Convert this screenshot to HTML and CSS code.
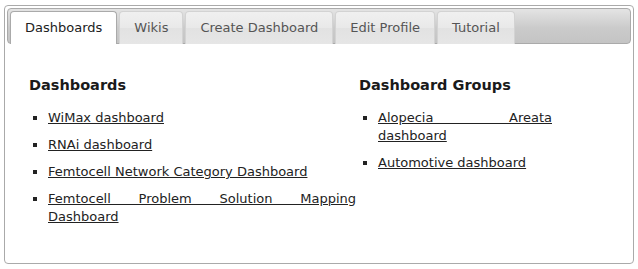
FILE: index.html
```html
<!DOCTYPE html>
<html lang="en">
<head>
  <meta charset="UTF-8">
  <title>Dashboards</title>
  <link rel="stylesheet" href="styles.css">
</head>
<body>

  <div class="tabs">
    <ul class="tab-nav">
      <li class="active"><a href="#">Dashboards</a></li>
      <li><a href="#">Wikis</a></li>
      <li><a href="#">Create Dashboard</a></li>
      <li><a href="#">Edit Profile</a></li>
      <li><a href="#">Tutorial</a></li>
    </ul>

    <div class="panel">
      <div class="col col-left">
        <h3>Dashboards</h3>
        <ul class="links">
          <li><a href="#">WiMax dashboard</a></li>
          <li><a href="#">RNAi dashboard</a></li>
          <li><a href="#">Femtocell Network Category Dashboard</a></li>
          <li><a href="#">Femtocell Problem Solution Mapping Dashboard</a></li>
        </ul>
      </div>
      <div class="col col-right">
        <h3>Dashboard Groups</h3>
        <ul class="links">
          <li><a href="#">Alopecia Areata dashboard</a></li>
          <li><a href="#">Automotive dashboard</a></li>
        </ul>
      </div>
    </div>
  </div>

</body>
</html>
```

FILE: styles.css
```css
body {
  margin: 5px 4px;
  background: #fff;
  font-family: Verdana, 'DejaVu Sans', sans-serif;
  font-size: 13px;
  color: #222;
}
.tabs {
  border: 1px solid #aaa;
  border-radius: 4px;
  padding: 2px;
  background: #fff;
}
.tab-nav {
  display: flex;
  list-style: none;
  margin: 0;
  padding: 2px 2px 0 2px;
  border: 1px solid #aaa;
  border-radius: 4px;
  background: linear-gradient(#e4e4e4, #cbcbcb 55%, #c4c4c4);
}
.tab-nav li {
  margin: 0 2px -1px 0;
  border: 1px solid #d3d3d3;
  border-bottom: none;
  border-radius: 4px 4px 0 0;
  background: linear-gradient(#f0f0f0, #e9e9e9 50%, #e2e2e2 51%, #e6e6e6);
}
.tab-nav li a {
  display: block;
  padding: 8px 14px 7px 14px;
  line-height: 16px;
  color: #555;
  text-decoration: none;
}
.tab-nav li.active {
  border-color: #aaa;
  background: #fff;
  padding-bottom: 1px;
}
.tab-nav li.active a {
  color: #212121;
}
.panel {
  display: grid;
  grid-template-columns: 330px 193px;
  padding: 13px 22px 26px 22px;
}
.col h3 {
  margin: 18px 0 14px 0;
  font-size: 14.5px;
  line-height: 20px;
  font-weight: bold;
  color: #1a1a1a;
}
.links {
  list-style: square;
  margin: 0;
  padding-left: 19px;
}
.col-left .links {
  padding-right: 3px;
}
.links li {
  line-height: 18px;
  margin-bottom: 9px;
  text-align: justify;
}
.links a {
  color: #222;
  text-decoration: underline;
}
```
